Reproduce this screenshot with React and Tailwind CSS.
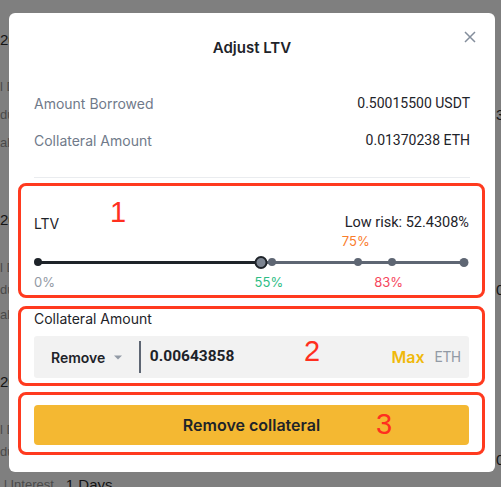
import React from "react";

function BgLeft() {
  return (
    <div className="flex flex-col whitespace-nowrap font-['Liberation_Sans',sans-serif] text-[15px]">
      <div className="mt-[30px] h-[20px] leading-[20px] text-[#141414]">2023-01-01</div>
      <div className="mt-[27px] h-[20px] leading-[20px] text-[#4a4a4a] text-[13px]">l Debt</div>
      <div className="mt-[8px] h-[20px] leading-[20px] text-[#4a4a4a] text-[13px]">duration</div>
      <div className="mt-[8px] h-[20px] leading-[20px] text-[#4a4a4a] text-[13px]">al</div>
      <div className="mt-[57px] h-[20px] leading-[20px] text-[#141414]">2023-01-01</div>
      <div className="mt-[28px] h-[20px] leading-[20px] text-[#4a4a4a] text-[13px]">l Debt</div>
      <div className="mt-[2px] h-[20px] leading-[20px] text-[#4a4a4a] text-[13px]">duration</div>
      <div className="mt-[5px] h-[20px] leading-[20px] text-[#4a4a4a] text-[13px]">al</div>
      <div className="mt-[47px] h-[20px] leading-[20px] text-[#141414]">2023-01-01</div>
      <div className="mt-[28px] h-[20px] leading-[20px] text-[#4a4a4a] text-[13px]">l Debt</div>
      <div className="mt-[2px] h-[20px] leading-[20px] text-[#4a4a4a] text-[13px]">duration</div>
      <div className="mt-[13px] h-[20px] leading-[20px] flex gap-[12px]">
        <span className="text-[#4a4a4a] text-[13px] pl-[4px]">l Interest</span>
        <span className="text-[#141414]">1 Days</span>
      </div>
    </div>
  );
}

function BgRight() {
  return (
    <div className="ml-auto w-[5px] flex flex-col whitespace-nowrap font-['Liberation_Sans',sans-serif] text-[15px] text-[#141414]">
      <div className="mt-[105px] h-[20px] leading-[20px]">3.00</div>
      <div className="mt-[155px] h-[20px] leading-[20px]">0.00</div>
      <div className="mt-[150px] h-[20px] leading-[20px]">0.00</div>
    </div>
  );
}

function Annot({ children, className }) {
  return (
    <span
      className={
        "absolute font-['Liberation_Sans',sans-serif] text-[29px] leading-none text-[#ff2f1f] " +
        className
      }
    >
      {children}
    </span>
  );
}

export default function App() {
  return (
    <div className="relative w-[501px] h-[487px] overflow-hidden bg-[#7f7f7f] flex">
      <BgLeft />
      <BgRight />

      <div className="absolute left-[9px] top-[13px] w-[486px] h-[459px] bg-white rounded-[6px] flex flex-col font-['Inter',sans-serif] text-[#1e2329]">
        <div className="relative h-[70px] flex items-center justify-center">
          <span className="text-[15px] font-semibold">Adjust LTV</span>
          <svg
            className="absolute left-[455px] top-[18px]"
            width="12"
            height="12"
            viewBox="0 0 12 12"
            fill="none"
          >
            <path d="M1 1L11 11M11 1L1 11" stroke="#848e9c" strokeWidth="1.5" />
          </svg>
        </div>

        <div className="px-[25px] text-[14px]">
          <div className="h-[40px] flex items-center justify-between">
            <span className="text-[#707a8a]">Amount Borrowed</span>
            <span className="font-['Roboto',sans-serif]">0.50015500 USDT</span>
          </div>
          <div className="h-[34px] flex items-center justify-between">
            <span className="text-[#707a8a]">Collateral Amount</span>
            <span className="font-['Roboto',sans-serif]">0.01370238 ETH</span>
          </div>
          <div className="mt-[20px] h-px bg-[#eaecef]" />
        </div>

        {/* Box 1 */}
        <div className="relative mt-[5px] ml-[9px] w-[467px] h-[115px] border-[3px] border-[#ff3a1f] rounded-[8px] px-[13px]">
          <Annot className="left-[89px] top-[12px]">1</Annot>
          <div className="mt-[27px] h-[20px] flex items-center justify-between text-[14px]">
            <span>LTV</span>
            <span className="font-['Roboto',sans-serif] text-[14.5px]">Low risk: 52.4308%</span>
          </div>
          <div className="ml-[4px] mr-[5px] text-[13px]">
            <div className="relative h-[16px]">
              <span className="absolute left-[74.6%] top-0 -translate-x-1/2 leading-[16px] text-[#fa7d2c]">75%</span>
            </div>
            <div className="relative mt-[6px] h-[14px]">
              <div className="absolute left-0 right-0 top-[6px] h-[3px] bg-[#5e6673]" />
              <div className="absolute left-0 w-[52.43%] top-[6px] h-[3px] bg-[#1e2329]" />
              <div className="absolute left-0 top-[3px] w-[8px] h-[8px] -translate-x-1/2 rounded-full bg-[#1e2329]" />
              <div className="absolute left-[55%] top-[3px] w-[8px] h-[8px] -translate-x-1/2 rounded-full bg-[#5e6673]" />
              <div className="absolute left-[75%] top-[3px] w-[8px] h-[8px] -translate-x-1/2 rounded-full bg-[#5e6673]" />
              <div className="absolute left-[83%] top-[3px] w-[8px] h-[8px] -translate-x-1/2 rounded-full bg-[#5e6673]" />
              <div className="absolute left-full top-[2.5px] w-[9px] h-[9px] -translate-x-1/2 rounded-full bg-[#5e6673]" />
              <div className="absolute left-[52.43%] top-[0.5px] w-[13px] h-[13px] -translate-x-1/2 rounded-full bg-[#7c8491] border-2 border-[#1e2329]" />
            </div>
            <div className="relative mt-[5px] h-[16px] leading-[16px]">
              <span className="absolute left-[-4px] top-0 text-[#929aa5]">0%</span>
              <span className="absolute left-[54.2%] top-0 -translate-x-1/2 text-[#2ebd85]">55%</span>
              <span className="absolute left-[82.3%] top-0 -translate-x-1/2 text-[#f6465d]">83%</span>
            </div>
          </div>
        </div>

        {/* Box 2 */}
        <div className="relative mt-[8px] ml-[9px] w-[467px] h-[80px] border-[3px] border-[#ff3a1f] rounded-[8px] px-[13px]">
          <div className="h-[18px] flex items-center text-[14px]">Collateral Amount</div>
          <div className="mt-[9px] h-[42px] bg-[#f2f2f2] rounded-[3px] flex items-center pl-[17px] pr-[8px]">
            <span className="text-[14px] font-semibold">Remove</span>
            <svg className="ml-[9px]" width="8" height="5" viewBox="0 0 8 5">
              <path d="M0 0.5H8L4 4.5Z" fill="#929aa5" />
            </svg>
            <div className="ml-[17px] w-[1.5px] h-[32px] bg-[#5e6673]" />
            <span className="ml-[9px] font-['Roboto',sans-serif] text-[15.5px] font-bold">0.00643858</span>
            <span className="ml-auto text-[16px] font-semibold text-[#f0b90b]">Max</span>
            <span className="ml-[10px] font-['Roboto',sans-serif] text-[14px] text-[#929aa5]">ETH</span>
          </div>
          <Annot className="left-[283px] top-[28px]">2</Annot>
        </div>

        {/* Box 3 */}
        <div className="relative mt-[6px] ml-[9px] w-[467px] h-[63px] border-[3px] border-[#ff3a1f] rounded-[8px] px-[13px] pt-[10px]">
          <button className="w-full h-[40px] bg-[#f4b832] rounded-[4px] text-[16px] font-semibold text-[#1e2329]">
            Remove collateral
          </button>
          <Annot className="left-[355px] top-[15px]">3</Annot>
        </div>
      </div>
    </div>
  );
}
